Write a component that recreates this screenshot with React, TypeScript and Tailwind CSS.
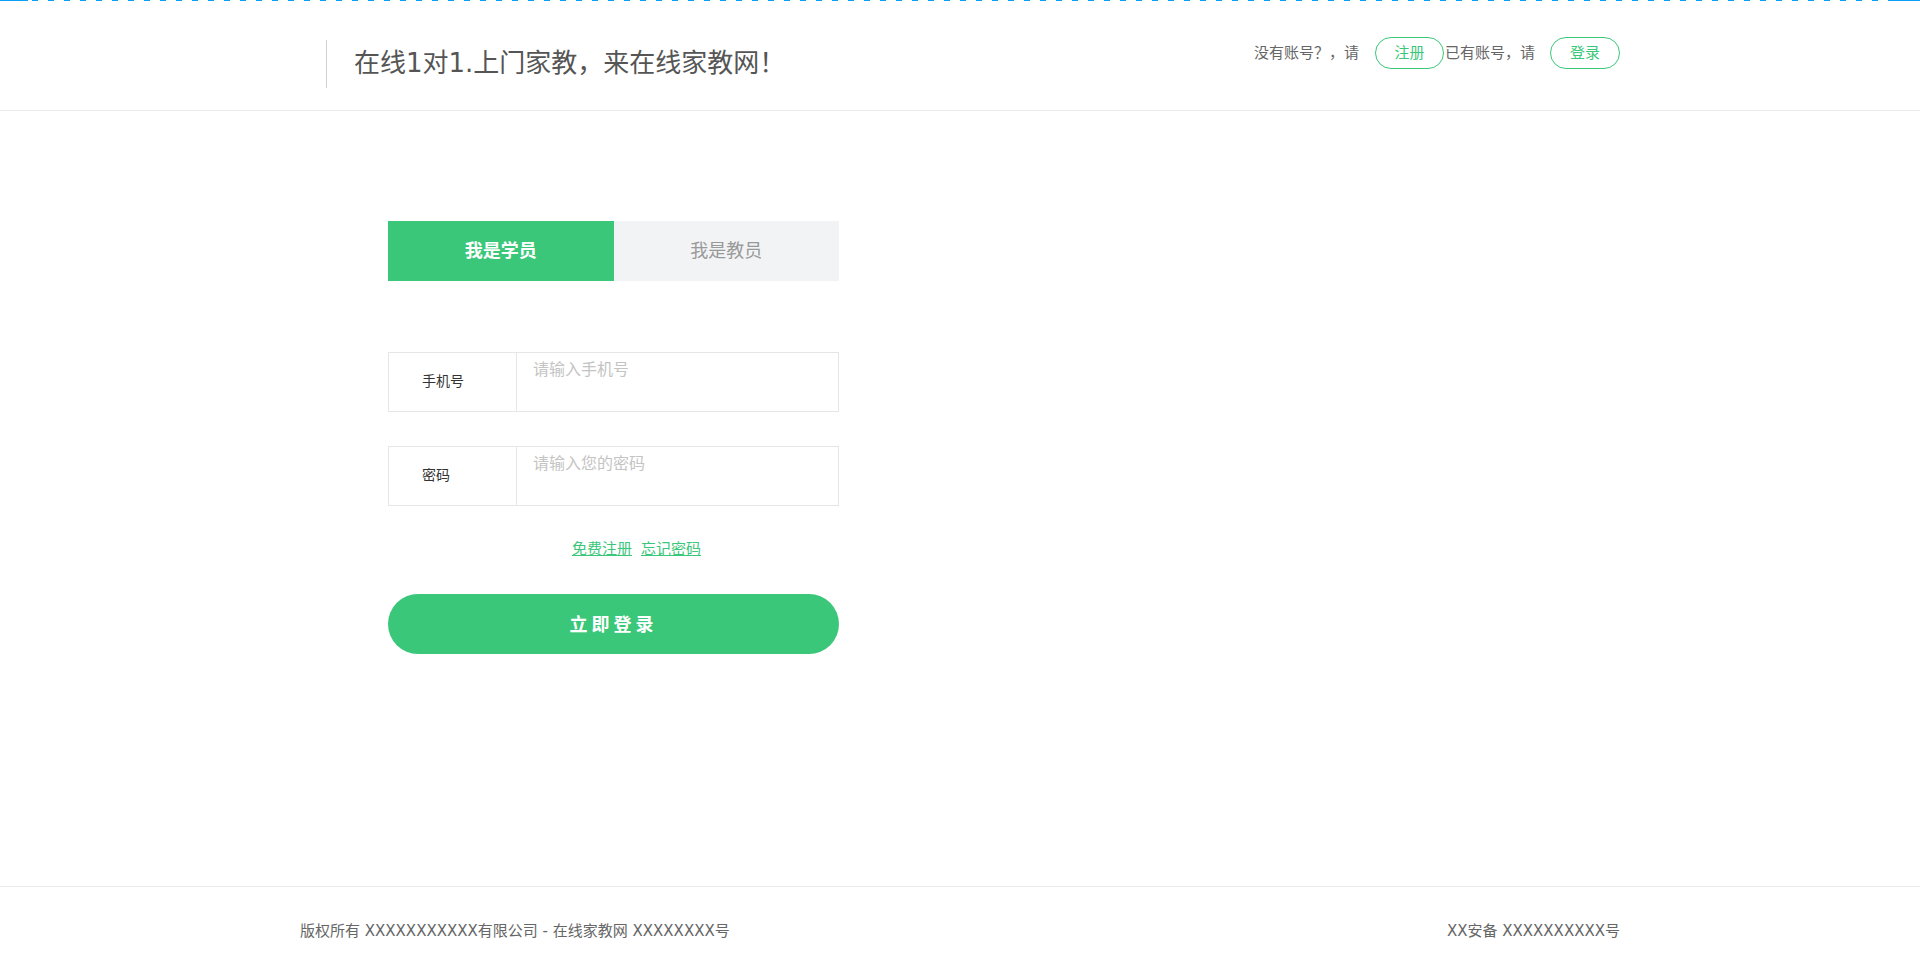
import { useState } from 'react'

const GREEN = '#3ac779'

export default function App() {
  const [role, setRole] = useState<'student' | 'teacher'>('student')

  return (
    <div className="min-h-[980px] bg-white font-['DejaVu_Sans','Noto_Sans_CJK_SC',sans-serif] text-[#333]">
      {/* top loading line */}
      <div className="flex h-px w-full">
        <div className="w-[28px] bg-[#0aa0f5]" />
        <div className="flex-1 bg-[repeating-linear-gradient(90deg,transparent_0_4px,#0aa0f5_4px_10px,transparent_10px_16px)]" />
        <div className="w-[32px] bg-[#0aa0f5]" />
      </div>

      {/* header */}
      <header className="h-[110px] border-b border-[#eaeaea]">
        <div className="mx-auto flex w-[1320px] justify-between">
          <div className="ml-[26px] mt-[39px] flex h-[48px] items-center border-l border-[#d0d0d0] pl-[27px]">
            <h1 className="pb-[2px] text-[26px] leading-none text-[#555]">在线1对1.上门家教，来在线家教网！</h1>
          </div>
          <div className="mt-[36px] flex h-[32px] items-center text-[15px] text-[#666]">
            <span>没有账号？，请</span>
            <button className="ml-[16px] h-[32px] w-[69px] rounded-full border border-[#3ac779] text-[15px] text-[#3ac779]">
              注册
            </button>
            <span className="ml-[1px]">已有账号，请</span>
            <button className="ml-[15px] h-[32px] w-[70px] rounded-full border border-[#3ac779] text-[15px] text-[#3ac779]">
              登录
            </button>
          </div>
        </div>
      </header>

      {/* main */}
      <main className="h-[775px]">
        <div className="mx-auto w-[1320px] pt-[110px]">
          <div className="ml-[88px] w-[451px]">
            {/* tabs */}
            <div className="flex h-[60px]">
              <button
                onClick={() => setRole('student')}
                className={`flex-1 pb-[1px] text-[18px] ${role === 'student' ? 'bg-[#3ac779] font-bold text-white' : 'bg-[#f2f3f5] text-[#999]'}`}
              >
                我是学员
              </button>
              <button
                onClick={() => setRole('teacher')}
                className={`flex-1 pb-[1px] text-[18px] ${role === 'teacher' ? 'bg-[#3ac779] font-bold text-white' : 'bg-[#f2f3f5] text-[#999]'}`}
              >
                我是教员
              </button>
            </div>

            {/* fields */}
            <div className="mt-[71px] flex h-[60px] border border-[#e6e6e6]">
              <label className="flex w-[128px] items-center border-r border-[#e6e6e6] pb-[2px] pl-[33px] text-[14px] text-[#333]">
                手机号
              </label>
              <input
                className="h-[32px] flex-1 pl-[16px] text-[16px] outline-none placeholder:text-[#c4c4c4]"
                placeholder="请输入手机号"
              />
            </div>
            <div className="mt-[34px] flex h-[60px] border border-[#e6e6e6]">
              <label className="flex w-[128px] items-center border-r border-[#e6e6e6] pb-[2px] pl-[33px] text-[14px] text-[#333]">
                密码
              </label>
              <input
                type="password"
                className="h-[32px] flex-1 pl-[16px] text-[16px] outline-none placeholder:text-[#c4c4c4]"
                placeholder="请输入您的密码"
              />
            </div>

            {/* links */}
            <div className="mt-[33px] flex h-[20px] items-center gap-[9px] pl-[184px] text-[15px] leading-[20px]" style={{ color: GREEN }}>
              <a href="#" className="underline">免费注册</a>
              <a href="#" className="underline">忘记密码</a>
            </div>

            <button className="mt-[35px] h-[60px] w-full rounded-full bg-[#3ac779] text-[18px] font-bold tracking-[4px] text-white">
              立即登录
            </button>
          </div>
        </div>
      </main>

      {/* footer */}
      <footer className="h-[93px] border-t border-[#eaeaea]">
        <div className="mx-auto flex w-[1320px] justify-between pt-[34px] text-[15px] leading-[20px] text-[#666]">
          <span>版权所有 XXXXXXXXXXX有限公司 - 在线家教网 XXXXXXXX号</span>
          <span>XX安备 XXXXXXXXXX号</span>
        </div>
      </footer>
    </div>
  )
}
